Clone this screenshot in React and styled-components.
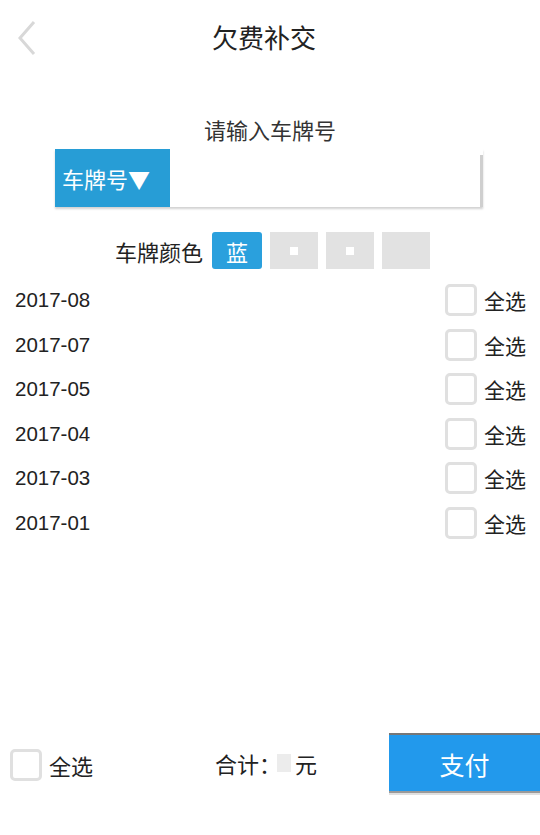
import React, { useState } from 'react';
import styled, { createGlobalStyle } from 'styled-components';

const GlobalStyle = createGlobalStyle`
  * { box-sizing: border-box; }
  html, body { margin: 0; padding: 0; background: #fff; }
  body {
    font-family: "Noto Sans CJK SC", "Liberation Sans", sans-serif;
    color: #222;
  }
`;

const months = ['2017-08', '2017-07', '2017-05', '2017-04', '2017-03', '2017-01'];
const colors = [
  { name: '蓝', active: true, dot: false },
  { name: '', active: false, dot: true },
  { name: '', active: false, dot: true },
  { name: '', active: false, dot: false },
];

const App = () => {
  const [checked, setChecked] = useState({});
  const toggle = (m) => setChecked((prev) => ({ ...prev, [m]: !prev[m] }));

  return (
    <Page>
      <GlobalStyle />
      <Header>
        <BackButton aria-label="back">
          <svg width="22" height="38" viewBox="0 0 22 38">
            <polyline points="18,3 4,19 18,35" fill="none" stroke="#d8d8d8" strokeWidth="3" />
          </svg>
        </BackButton>
        <Title>欠费补交</Title>
      </Header>

      <Prompt>请输入车牌号</Prompt>
      <InputRow>
        <TypeButton>车牌号▼</TypeButton>
        <PlateInput />
      </InputRow>

      <ColorRow>
        <ColorLabel>车牌颜色</ColorLabel>
        {colors.map((c, i) => (
          <ColorChip key={i} $active={c.active}>
            {c.name}
            {c.dot && <ChipDot />}
          </ColorChip>
        ))}
      </ColorRow>

      <List>
        {months.map((m) => (
          <Row key={m}>
            <Month>{m}</Month>
            <SelectAll onClick={() => toggle(m)}>
              <Box $checked={checked[m]} />
              <span>全选</span>
            </SelectAll>
          </Row>
        ))}
      </List>

      <Footer>
        <FooterSelect>
          <Box />
          <span>全选</span>
        </FooterSelect>
        <Total>
          合计：<Amount />元
        </Total>
        <PayButton>支付</PayButton>
      </Footer>
    </Page>
  );
};

const Page = styled.div`
  width: 540px;
  height: 835px;
  display: flex;
  flex-direction: column;
  background: #fff;
`;

const Header = styled.div`
  position: relative;
  height: 72px;
  display: flex;
  justify-content: center;
  align-items: center;
`;

const BackButton = styled.div`
  position: absolute;
  left: 16px;
  top: 19px;
`;

const Title = styled.div`
  font-size: 26px;
  color: #222;
  padding-right: 12px;
`;

const Prompt = styled.div`
  margin-top: 41px;
  text-align: center;
  font-size: 22px;
  color: #333;
  line-height: 32px;
`;

const InputRow = styled.div`
  margin: 4px 57px 0 55px;
  height: 58px;
  display: flex;
  box-shadow: 0 2px 2px rgba(0, 0, 0, 0.18);
`;

const TypeButton = styled.div`
  width: 115px;
  background: #279dd6;
  color: #fff;
  font-size: 22px;
  display: flex;
  align-items: center;
  padding-left: 7px;
  white-space: nowrap;
`;

const PlateInput = styled.div`
  flex: 1;
  border-right: 3px solid #cfcfcf;
  margin: 6px 0 0 0;
`;

const ColorRow = styled.div`
  margin-top: 25px;
  display: flex;
  align-items: center;
  padding-left: 115px;
  gap: 8px;
`;

const ColorLabel = styled.div`
  font-size: 22px;
  color: #222;
  margin-right: 1px;
`;

const ColorChip = styled.div`
  position: relative;
  width: ${(p) => (p.$active ? '50px' : '48px')};
  height: 37px;
  background: ${(p) => (p.$active ? '#2aa0dd' : '#e2e2e2')};
  border-radius: ${(p) => (p.$active ? '3px' : '0')};
  color: #fff;
  font-size: 22px;
  display: flex;
  justify-content: center;
  align-items: center;
`;

const ChipDot = styled.span`
  width: 8px;
  height: 8px;
  background: #fff;
`;

const List = styled.div`
  margin-top: 9px;
  display: flex;
  flex-direction: column;
`;

const Row = styled.div`
  height: 44.5px;
  display: flex;
  align-items: center;
  justify-content: space-between;
  padding: 0 14px 0 15px;
`;

const Month = styled.div`
  font-family: "Liberation Sans", "Noto Sans CJK SC", sans-serif;
  font-size: 20.5px;
  color: #222;
`;

const SelectAll = styled.div`
  display: flex;
  align-items: center;
  gap: 7px;
  font-size: 21px;
  color: #222;
  cursor: pointer;
`;

const Box = styled.span`
  width: 32px;
  height: 32px;
  border: 3px solid #e0e0e0;
  border-radius: 5px;
  background: ${(p) => (p.$checked ? '#2aa0dd' : '#fff')};
`;

const Footer = styled.div`
  margin-top: auto;
  margin-bottom: 42px;
  height: 60px;
  display: flex;
  align-items: center;
`;

const FooterSelect = styled.div`
  display: flex;
  align-items: center;
  gap: 7px;
  padding-left: 10px;
  font-size: 22px;
  color: #222;
  padding-top: 4px;
`;

const Total = styled.div`
  margin-left: 122px;
  display: flex;
  align-items: center;
  font-size: 22px;
  color: #222;
`;

const Amount = styled.span`
  width: 14px;
  height: 18px;
  margin: 0 4px 0 -4px;
  background: #ececec;
`;

const PayButton = styled.div`
  margin-left: auto;
  width: 151px;
  height: 60px;
  background: #2299ec;
  color: #fff;
  font-size: 25px;
  display: flex;
  justify-content: center;
  align-items: center;
  box-shadow: 0 -2px 0 #9a9a9a inset, 0 2px 0 rgba(0,0,0,0.12);
  border-top: 2px solid #777;
`;

export default App;
